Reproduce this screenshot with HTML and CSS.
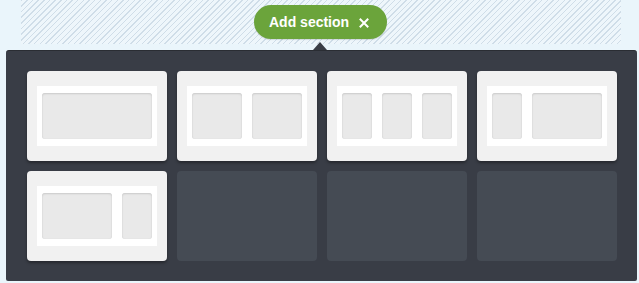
FILE: index.html
```html
<!DOCTYPE html>
<html>
<head>
<meta charset="utf-8">
<link rel="stylesheet" href="styles.css">
</head>
<body>
<div class="page">
  <div class="strip"></div>
  <button class="add-btn">Add section
    <svg class="x-icon" width="10" height="10" viewBox="0 0 10 10"><path d="M1.5 1.5 L8.5 8.5 M8.5 1.5 L1.5 8.5" stroke="#fff" stroke-width="2" stroke-linecap="square"/></svg>
  </button>
  <div class="panel">
    <div class="card"><div class="frame"><div class="col w110"></div></div></div>
    <div class="card"><div class="frame"><div class="col w50"></div><div class="col w50"></div></div></div>
    <div class="card"><div class="frame"><div class="col w30"></div><div class="col w30"></div><div class="col w30"></div></div></div>
    <div class="card"><div class="frame"><div class="col w30"></div><div class="col w70"></div></div></div>
    <div class="card"><div class="frame"><div class="col w70"></div><div class="col w30"></div></div></div>
    <div class="slot"></div>
    <div class="slot"></div>
    <div class="slot"></div>
  </div>
</div>
</body>
</html>
```
FILE: styles.css
```css
html, body {
  margin: 0;
  padding: 0;
  background: #eaf5fb;
  font-family: "Liberation Sans", Arial, sans-serif;
}
.page {
  position: relative;
  width: 639px;
  height: 283px;
  overflow: hidden;
}
.strip {
  margin: 0 18px 0 21px;
  height: 44px;
  background-color: #eef6fb;
  background-image: repeating-linear-gradient(135deg, #cfdde8 0 1px, transparent 1px 4px);
}
.add-btn {
  position: absolute;
  left: 254px;
  top: 5px;
  width: 133px;
  height: 34px;
  border: none;
  border-radius: 17px;
  background: #6ba43b;
  color: #fff;
  font-family: "Liberation Sans", Arial, sans-serif;
  font-weight: bold;
  font-size: 14px;
  padding: 0 0 0 15px;
  display: flex;
  align-items: center;
  gap: 10px;
  box-shadow: 0 1px 1px rgba(0,0,0,0.12);
}
.x-icon { display: block; margin-top: 1px; }
.panel {
  position: relative;
  margin: 6px 2px 0 6px;
  width: 590px;
  padding: 20px 20px 20px 21px;
  background: #393d46;
  border-top: 1px solid #2a2d33;
  border-radius: 3px 3px 2px 2px;
  display: grid;
  grid-template-columns: repeat(4, 140px);
  grid-auto-rows: 90px;
  gap: 10px;
}
.panel::before {
  content: "";
  position: absolute;
  left: 307px;
  top: -9px;
  width: 0;
  height: 0;
  border-left: 7px solid transparent;
  border-right: 7px solid transparent;
  border-bottom: 8px solid #393d46;
}
.card {
  background: #f1f1f1;
  border-radius: 4px;
  padding: 15px 10px;
  box-shadow: 0 2px 3px rgba(0,0,0,0.35);
}
.frame {
  background: #fff;
  height: 60px;
  box-sizing: border-box;
  padding: 7px 5px;
  display: flex;
  gap: 10px;
}
.col {
  background: #e9e9e9;
  border-radius: 3px;
  box-shadow: inset 0 1px 2px rgba(0,0,0,0.13), inset 0 0 1px rgba(0,0,0,0.1);
}
.w110 { width: 110px; }
.w70 { width: 70px; }
.w50 { width: 50px; }
.w30 { width: 30px; }
.slot {
  background: #454b54;
  border-radius: 4px;
}
```
